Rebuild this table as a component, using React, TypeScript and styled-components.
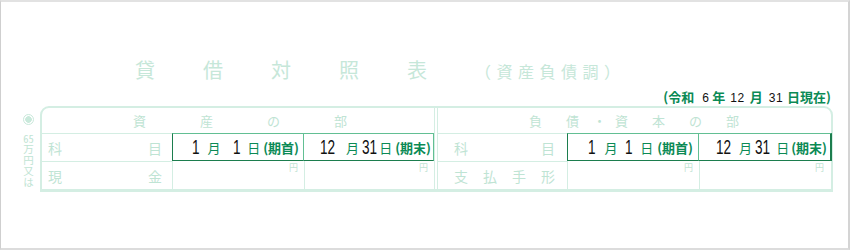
import React from "react"
import styled, { createGlobalStyle } from "styled-components"

const LINE = "#d4eee3"
const PALE = "#bfe4d4"
const DARK = "#1c7d4e"
const MID = "#62bf93"
const GREEN = "#0b8a55"
const CJK = `"Noto Sans CJK JP", "Noto Sans", sans-serif`
const NUM = `"Liberation Sans", Arial, sans-serif`

const Global = createGlobalStyle`
    html, body {
        margin: 0;
        padding: 0;
        background: #fff;
    }
    body {
        font-family: ${CJK};
    }
`
const Page = styled.div`
    box-sizing: border-box;
    width: 850px;
    height: 250px;
    border: 1px solid #cfcfcf;
    border-top: 2px solid #e2e2e2;
    border-bottom: 2px solid #dcdcdc;
    border-right: 2px solid #d4d4d4;
    display: flex;
    flex-direction: column;
`
const TitleRow = styled.div`
    display: flex;
    align-items: baseline;
    margin-top: 55px;
    padding-left: 134px;
    height: 26px;
`
const Title = styled.h1`
    margin: 0;
    font-size: 20px;
    font-weight: 400;
    line-height: 26px;
    letter-spacing: 48px;
    color: #c6e7d9;
`
const Sub = styled.span`
    font-size: 16px;
    line-height: 26px;
    letter-spacing: 5.5px;
    color: #c6e7d9;
`
const DateLine = styled.div`
    align-self: flex-end;
    margin: 6px 17px 0 0;
    font-size: 13px;
    line-height: 16px;
    font-weight: 700;
    color: ${GREEN};
    white-space: pre;
`
const Num = styled.span<{ $l?: number; $r?: number }>`
    color: #111;
    font-family: ${NUM};
    font-size: 12px;
    font-weight: 400;
    letter-spacing: 0.5px;
    margin: 0 ${p => p.$r ?? 5}px 0 ${p => p.$l ?? 5}px;
`
const Body = styled.div`
    display: flex;
`
const Side = styled.div`
    box-sizing: border-box;
    width: 39px;
    padding: 8px 0 0 15px;
    display: flex;
    flex-direction: column;
    align-items: center;
    gap: 8px;
`
const Dot = styled.div`
    box-sizing: border-box;
    width: 11px;
    height: 11px;
    border-radius: 50%;
    border: 1.5px solid #c9e9db;
    background: radial-gradient(circle, #c9e9db 0 3px, #fff 3.6px);
`
const Vert = styled.div`
    writing-mode: vertical-rl;
    text-orientation: upright;
    font-size: 10.5px;
    line-height: 12px;
    letter-spacing: 0.5px;
    color: ${PALE};
    span {
        text-combine-upright: all;
    }
`
const Table = styled.div`
    box-sizing: border-box;
    width: 793px;
    border: 2px solid ${LINE};
    border-bottom-width: 3px;
    border-radius: 9px 9px 0 0;
    display: grid;
    grid-template-columns: 130px 132px 130px 4px 129px 132px 131px;
    grid-template-rows: 25px 28px 28px;
`
const Head = styled.div<{ $pl: number; $gap: number }>`
    grid-column: span 3;
    display: flex;
    align-items: center;
    padding-left: ${p => p.$pl}px;
    gap: ${p => p.$gap}px;
    font-size: 13px;
    color: ${PALE};
`
const MidDot = styled.span`
    width: 6px;
    margin: 0 -8px 0 -10px;
    text-align: center;
`
const Divider = styled.div`
    grid-column: 4;
    grid-row: 1 / 4;
    border-left: 1px solid ${LINE};
    border-right: 1px solid ${LINE};
`
const Label = styled.div<{ $pl: number; $pr: number }>`
    display: flex;
    align-items: center;
    justify-content: space-between;
    border-top: 1px solid ${LINE};
    padding: 0 ${p => p.$pr}px 0 ${p => p.$pl}px;
    font-size: 14px;
    color: ${PALE};
`
const DateCell = styled.div<{ $first?: boolean; $edge?: boolean; $pr: number }>`
    box-sizing: border-box;
    display: flex;
    align-items: center;
    justify-content: flex-end;
    padding-right: ${p => p.$pr}px;
    border: 1px solid ${DARK};
    border-top-color: ${MID};
    border-left: ${p => (p.$first ? `1px solid ${DARK}` : "none")};
    border-right: ${p => (p.$edge ? `2px solid ${DARK}` : `1px solid ${MID}`)};
    margin-right: ${p => (p.$edge ? "-2px" : "0")};
    font-size: 13px;
    color: ${GREEN};
    white-space: pre;
`
const Big = styled.span<{ $n: number; $ml?: number }>`
    display: inline-block;
    width: ${p => p.$n * 7.6}px;
    margin-left: ${p => p.$ml ?? 0}px;
    font-family: ${NUM};
    font-size: 20px;
    line-height: 1;
    color: #111;
    transform: scaleX(0.68);
    transform-origin: left center;
`
const Kanji = styled.span<{ $ml?: number }>`
    margin-left: ${p => p.$ml ?? 0}px;
`
const Note = styled.span<{ $ml?: number }>`
    margin-left: ${p => p.$ml ?? 3}px;
    font-weight: 700;
`
const Amount = styled.div`
    display: flex;
    justify-content: flex-end;
    align-items: flex-start;
    padding: 1px 6px 0 0;
    border-left: 1px solid ${LINE};
    font-size: 9px;
    line-height: 11px;
    color: ${PALE};
`

type Gaps = { a: number[]; b: number[]; pa: number; pb: number }

const LEFT: Gaps = { a: [8, 12, 7, 3], b: [11, 3, 2, 3], pa: 4, pb: 2 }
const RIGHT: Gaps = { a: [9, 7, 8, 4], b: [8, 3, 6, 2], pa: 5, pb: 3 }

const Dates = ({ g, edge }: { g: Gaps; edge?: boolean }) => (
    <>
        <DateCell $first $pr={g.pa}>
            <Big $n={1}>1</Big>
            <Kanji $ml={g.a[0]}>月</Kanji>
            <Big $n={1} $ml={g.a[1]}>1</Big>
            <Kanji $ml={g.a[2]}>日</Kanji>
            <Note $ml={g.a[3]}>(期首)</Note>
        </DateCell>
        <DateCell $edge={edge} $pr={g.pb}>
            <Big $n={2}>12</Big>
            <Kanji $ml={g.b[0]}>月</Kanji>
            <Big $n={2} $ml={g.b[1]}>31</Big>
            <Kanji $ml={g.b[2]}>日</Kanji>
            <Note $ml={g.b[3]}>(期末)</Note>
        </DateCell>
    </>
)

const App = () => (
    <Page>
        <Global />
        <TitleRow>
            <Title>貸借対照表</Title>
            <Sub>（資産負債調）</Sub>
        </TitleRow>
        <DateLine>
            (令和<Num $l={8} $r={3}>6</Num>年<Num>12</Num>月<Num $l={6} $r={4}>31</Num>日現在)
        </DateLine>
        <Body>
            <Side>
                <Dot />
                <Vert><span>65</span>万円又は</Vert>
            </Side>
            <Table>
                <Head $pl={91} $gap={54}>
                    <span>資</span><span>産</span><span>の</span><span>部</span>
                </Head>
                <Divider />
                <Head $pl={91} $gap={24}>
                    <span>負</span><span>債</span><MidDot>・</MidDot><span>資</span><span>本</span><span>の</span><span>部</span>
                </Head>

                <Label $pl={6} $pr={10}><span>科</span><span>目</span></Label>
                <Dates g={LEFT} />
                <Label $pl={16} $pr={12}><span>科</span><span>目</span></Label>
                <Dates g={RIGHT} edge />

                <Label $pl={6} $pr={10}><span>現</span><span>金</span></Label>
                <Amount>円</Amount>
                <Amount>円</Amount>
                <Label $pl={16} $pr={12}><span>支</span><span>払</span><span>手</span><span>形</span></Label>
                <Amount>円</Amount>
                <Amount>円</Amount>
            </Table>
        </Body>
    </Page>
)

export default App
